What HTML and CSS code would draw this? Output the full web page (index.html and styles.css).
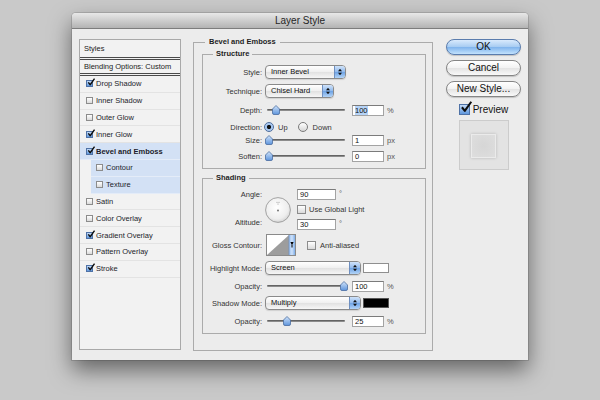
FILE: index.html
```html
<!DOCTYPE html>
<html>
<head>
<meta charset="utf-8">
<title>Layer Style</title>
<link rel="stylesheet" href="styles.css">
</head>
<body>
<svg class="defs" aria-hidden="true">
  <defs>
    <linearGradient id="gThumb" x1="0" y1="0" x2="0" y2="1">
      <stop offset="0" stop-color="#d3e5fb"/>
      <stop offset="1" stop-color="#5d94dc"/>
    </linearGradient>
    <radialGradient id="gDial" cx="0.45" cy="0.4" r="0.65">
      <stop offset="0" stop-color="#ffffff"/>
      <stop offset="0.7" stop-color="#eeeeee"/>
      <stop offset="1" stop-color="#cfcfcf"/>
    </radialGradient>
    <linearGradient id="gBlue" x1="0" y1="0" x2="1" y2="0">
      <stop offset="0" stop-color="#9cc2f2"/>
      <stop offset="0.5" stop-color="#cfe2fa"/>
      <stop offset="1" stop-color="#7eaee9"/>
    </linearGradient>
  </defs>
</svg>

<div class="window">
  <div class="titlebar">Layer Style</div>
  <div class="wbody">

    <div class="styles-panel">
      <div class="ph">Styles</div>
      <div class="ph ph2">Blending Options: Custom</div>
      <div class="item"><span class="cb on"><svg class="ck" viewBox="0 0 10 10"><path d="M1.6 4.8 L4 7.8 L9.4 0.2"/></svg></span>Drop Shadow</div>
      <div class="item"><span class="cb"></span>Inner Shadow</div>
      <div class="item"><span class="cb"></span>Outer Glow</div>
      <div class="item"><span class="cb on"><svg class="ck" viewBox="0 0 10 10"><path d="M1.6 4.8 L4 7.8 L9.4 0.2"/></svg></span>Inner Glow</div>
      <div class="item hl bold"><span class="cb on"><svg class="ck" viewBox="0 0 10 10"><path d="M1.6 4.8 L4 7.8 L9.4 0.2"/></svg></span>Bevel and Emboss</div>
      <div class="item hl sub"><span class="cb"></span>Contour</div>
      <div class="item hl sub"><span class="cb"></span>Texture</div>
      <div class="item"><span class="cb"></span>Satin</div>
      <div class="item"><span class="cb"></span>Color Overlay</div>
      <div class="item"><span class="cb on"><svg class="ck" viewBox="0 0 10 10"><path d="M1.6 4.8 L4 7.8 L9.4 0.2"/></svg></span>Gradient Overlay</div>
      <div class="item"><span class="cb"></span>Pattern Overlay</div>
      <div class="item"><span class="cb on"><svg class="ck" viewBox="0 0 10 10"><path d="M1.6 4.8 L4 7.8 L9.4 0.2"/></svg></span>Stroke</div>
    </div>

    <fieldset class="main">
      <legend>Bevel and Emboss</legend>

      <fieldset class="group">
        <legend>Structure</legend>
        <div class="row m5">
          <span class="lbl">Style:</span>
          <div class="select w81"><span class="sv">Inner Bevel</span><span class="sa"><svg viewBox="0 0 5 9"><path d="M2.5 0.5 L5 3.5 H0 Z M0 5.5 H5 L2.5 8.5 Z"/></svg></span></div>
        </div>
        <div class="row m5">
          <span class="lbl">Technique:</span>
          <div class="select w69"><span class="sv">Chisel Hard</span><span class="sa"><svg viewBox="0 0 5 9"><path d="M2.5 0.5 L5 3.5 H0 Z M0 5.5 H5 L2.5 8.5 Z"/></svg></span></div>
        </div>
        <div class="row h12 m6">
          <span class="lbl">Depth:</span>
          <div class="slider"><svg class="thumb" style="left:5px" viewBox="0 0 8 10"><path d="M4 0.5 L7.5 4 V8 Q7.5 9.5 6 9.5 H2 Q0.5 9.5 0.5 8 V4 Z"/></svg></div>
          <div class="field"><span class="sel">100</span></div>
          <span class="unit">%</span>
        </div>
        <div class="row h12 m5">
          <span class="lbl">Direction:</span>
          <span class="radio on"></span><span class="rt">Up</span>
          <span class="radio r2"></span><span class="rt">Down</span>
        </div>
        <div class="row h12 m1">
          <span class="lbl">Size:</span>
          <div class="slider"><svg class="thumb" style="left:-2px" viewBox="0 0 8 10"><path d="M4 0.5 L7.5 4 V8 Q7.5 9.5 6 9.5 H2 Q0.5 9.5 0.5 8 V4 Z"/></svg></div>
          <div class="field">1</div>
          <span class="unit">px</span>
        </div>
        <div class="row h12 m4">
          <span class="lbl">Soften:</span>
          <div class="slider"><svg class="thumb" style="left:-2px" viewBox="0 0 8 10"><path d="M4 0.5 L7.5 4 V8 Q7.5 9.5 6 9.5 H2 Q0.5 9.5 0.5 8 V4 Z"/></svg></div>
          <div class="field">0</div>
          <span class="unit">px</span>
        </div>
      </fieldset>

      <fieldset class="group shading">
        <legend>Shading</legend>
        <div class="angle">
          <span class="lbl a1">Angle:</span>
          <svg class="dial" viewBox="0 0 26 26">
            <circle cx="13" cy="13" r="12.4" fill="url(#gDial)" stroke="#8f8f8f" stroke-width="0.8"/>
            <circle cx="13" cy="13.5" r="0.9" fill="#666"/>
            <circle cx="12" cy="5.2" r="0.5" fill="#888"/>
            <circle cx="14" cy="5.2" r="0.5" fill="#888"/>
            <circle cx="13" cy="7" r="0.5" fill="#888"/>
          </svg>
          <div class="c3 r1"><div class="field w39">90</div><span class="unit deg">°</span></div>
          <div class="c3 r2"><span class="cb big"></span><span class="ct">Use Global Light</span></div>
          <span class="lbl a3">Altitude:</span>
          <div class="c3 r3"><div class="field w39">30</div><span class="unit deg">°</span></div>
        </div>
        <div class="row gloss">
          <span class="lbl">Gloss Contour:</span>
          <svg class="gsw" viewBox="0 0 30 22">
            <rect x="0.5" y="0.5" width="29" height="21" fill="#fff" stroke="#8a8a8a"/>
            <polygon points="1,21 23,1 23,21" fill="#9d9d9d"/>
            <rect x="23" y="1" width="6" height="20" fill="url(#gBlue)"/>
            <line x1="23" y1="1" x2="23" y2="21" stroke="#6f8fbf" stroke-width="0.8"/>
            <path d="M24.4 8 H27.6 L26 11.5 Z M25.5 11 H26.5 V13.5 H25.5 Z" fill="#000"/>
          </svg>
          <span class="cb big aa"></span><span class="ct2">Anti-aliased</span>
        </div>
        <div class="row m5">
          <span class="lbl">Highlight Mode:</span>
          <div class="select w96"><span class="sv">Screen</span><span class="sa"><svg viewBox="0 0 5 9"><path d="M2.5 0.5 L5 3.5 H0 Z M0 5.5 H5 L2.5 8.5 Z"/></svg></span></div>
          <span class="swatch white"></span>
        </div>
        <div class="row h12 m5">
          <span class="lbl">Opacity:</span>
          <div class="slider"><svg class="thumb" style="left:73px" viewBox="0 0 8 10"><path d="M4 0.5 L7.5 4 V8 Q7.5 9.5 6 9.5 H2 Q0.5 9.5 0.5 8 V4 Z"/></svg></div>
          <div class="field">100</div>
          <span class="unit">%</span>
        </div>
        <div class="row m4">
          <span class="lbl">Shadow Mode:</span>
          <div class="select w96"><span class="sv">Multiply</span><span class="sa"><svg viewBox="0 0 5 9"><path d="M2.5 0.5 L5 3.5 H0 Z M0 5.5 H5 L2.5 8.5 Z"/></svg></span></div>
          <span class="swatch black"></span>
        </div>
        <div class="row h12 m5">
          <span class="lbl">Opacity:</span>
          <div class="slider"><svg class="thumb" style="left:16px" viewBox="0 0 8 10"><path d="M4 0.5 L7.5 4 V8 Q7.5 9.5 6 9.5 H2 Q0.5 9.5 0.5 8 V4 Z"/></svg></div>
          <div class="field">25</div>
          <span class="unit">%</span>
        </div>
      </fieldset>
    </fieldset>

    <div class="side">
      <div class="btn ok">OK</div>
      <div class="btn">Cancel</div>
      <div class="btn">New Style...</div>
      <div class="pv"><span class="cb on pvcb"><svg class="ck" viewBox="0 0 10 10"><path d="M1.6 4.8 L4 7.8 L9.4 0.2"/></svg></span><span>Preview</span></div>
      <div class="preview-box"><div class="preview-inner"></div></div>
    </div>

  </div>
</div>
</body>
</html>
```

FILE: styles.css
```css
* { box-sizing: border-box; }
html, body { margin: 0; padding: 0; }
body {
  width: 600px;
  height: 400px;
  overflow: hidden;
  background: #c9c9c9;
  font-family: "Liberation Sans", Arial, sans-serif;
  font-size: 7.5px;
  color: #222;
}
.defs { position: absolute; width: 0; height: 0; overflow: hidden; }

.window {
  margin: 13px 0 0 72px;
  width: 456px;
  height: 347px;
  background: #ececec;
  border-radius: 4px 4px 0 0;
  box-shadow: 0 10px 22px rgba(0,0,0,.5), 0 0 0 1px rgba(0,0,0,.12);
}
.titlebar {
  height: 16px;
  line-height: 15px;
  text-align: center;
  font-size: 10px;
  color: #262626;
  background: linear-gradient(#e8e8e8, #b3b3b3);
  border-bottom: 1px solid #7d7d7d;
  border-radius: 4px 4px 0 0;
}
.wbody {
  display: flex;
  align-items: flex-start;
  padding: 7px 7px 0 7px;
}

/* left list */
.styles-panel {
  width: 102px;
  height: 311px;
  margin-top: 3px;
  border: 1px solid #a9a9a9;
  background: #f2f2f2;
  flex: none;
}
.ph {
  height: 20px;
  line-height: 17px;
  padding-left: 4px;
  border-bottom: 3px double #4a4a4a;
  color: #222;
}
.ph2 { height: 16px; line-height: 13px; }
.item {
  height: 16.8px;
  display: flex;
  align-items: center;
  padding-left: 6px;
  border-bottom: 1px solid #e3e3e3;
  color: #1c1c2a;
}
.item.hl { background: #d3e1f5; border-bottom-color: #e4ecf8; }
.item.bold { font-weight: bold; }
.item.sub { margin-left: 11px; padding-left: 5px; }

.cb {
  position: relative;
  flex: none;
  width: 7px;
  height: 7px;
  margin-right: 3px;
  border: 1px solid #8c8c8c;
  background: linear-gradient(#ffffff, #dadada);
}
.cb.on {
  background: linear-gradient(#c4dbf7, #5f97dd);
  border-color: #4f72a6;
}
.ck {
  position: absolute;
  left: 0;
  top: -3px;
  width: 8px;
  height: 9px;
  overflow: visible;
}
.ck path { fill: none; stroke: #0d0d0d; stroke-width: 1.7; stroke-linejoin: round; }
.cb.big { width: 9px; height: 9px; margin-right: 0; }

/* main fieldset */
fieldset { margin: 0; min-width: 0; }
legend {
  font-weight: bold;
  line-height: 12px;
  color: #1e1e1e;
}
.main {
  width: 240px;
  margin-left: 12px;
  padding: 0 6px 16px 8px;
  border: 1px solid #ababab;
  flex: none;
}
.main > legend { margin-left: 3px; padding: 0 4px; }
.group {
  padding: 0 6px 6px 0;
  border: 1px solid #ababab;
}
.group > legend { margin-left: 10px; padding: 0 3px; }
.shading { margin-top: 3px; }

.row { display: flex; align-items: center; height: 14px; }
.h12 { height: 12px; }
.m1 { margin-top: 1px; }
.m4 { margin-top: 4px; }
.m5 { margin-top: 5px; }
.m6 { margin-top: 6px; }
.lbl {
  width: 59px;
  flex: none;
  text-align: right;
  color: #333;
}

.select {
  display: flex;
  height: 14px;
  margin-left: 3px;
  border: 1px solid #8a8a8a;
  border-radius: 4px;
  overflow: hidden;
  background: linear-gradient(#ffffff, #efefef 50%, #e1e1e1 51%, #f6f6f6);
  box-shadow: 0 1px 1px rgba(0,0,0,.12);
  flex: none;
}
.w81 { width: 81px; }
.w69 { width: 69px; }
.w96 { width: 96px; }
.sv { flex: 1; padding-left: 5px; line-height: 12px; color: #111; }
.sa {
  width: 11px;
  display: flex;
  align-items: center;
  justify-content: center;
  border-left: 1px solid #6e8fc0;
  background: linear-gradient(#d0e3fa, #90b9ec 50%, #6da2e4 51%, #b3d4f7);
}
.sa svg { width: 4px; height: 8px; fill: #111; }

.slider {
  position: relative;
  width: 78px;
  height: 12px;
  margin-left: 5px;
  flex: none;
}
.slider::before {
  content: "";
  position: absolute;
  left: 0;
  right: 0;
  top: 5px;
  height: 2px;
  border-radius: 1px;
  background: linear-gradient(#505050, #a0a0a0);
}
.thumb {
  position: absolute;
  top: 1px;
  width: 8px;
  height: 10px;
}
.thumb path { fill: url(#gThumb); stroke: #4a6c9f; stroke-width: 0.8; }

.field {
  width: 32px;
  height: 11px;
  margin-left: 7px;
  padding-left: 2px;
  line-height: 9px;
  background: #fff;
  border: 1px solid #a3a3a3;
  border-top-color: #7b7b7b;
  color: #111;
  flex: none;
}
.sel { background: #b5d3f7; }
.unit { margin-left: 3px; color: #555; }
.deg { align-self: flex-start; }

.radio {
  position: relative;
  width: 10px;
  height: 10px;
  margin-left: 2px;
  border-radius: 50%;
  border: 1px solid #7a7a7a;
  background: linear-gradient(#ffffff, #d6d6d6);
  flex: none;
}
.radio.on {
  border-color: #4d6d9c;
  background: radial-gradient(circle at 50% 50%, #111 0, #111 1.8px, #9fc2ef 2.4px, #c8dcf6 100%);
}
.radio.r2 { margin-left: 10px; }
.rt { margin-left: 4px; color: #333; }
.radio.r2 + .rt { margin-left: 5px; }

/* shading */
.angle {
  display: grid;
  grid-template-columns: 59px 35px auto;
  grid-template-rows: 11px 19px 11px;
  margin-top: 5px;
}
.a1 { grid-row: 1; grid-column: 1; align-self: center; }
.a3 { grid-row: 3; grid-column: 1; align-self: start; line-height: 8px; }
.dial {
  grid-row: 1 / 4;
  grid-column: 2;
  align-self: center;
  width: 26px;
  height: 26px;
  margin-left: 3px;
}
.c3 { grid-column: 3; display: flex; align-items: center; }
.r1 { grid-row: 1; }
.r2 { grid-row: 2; }
.r3 { grid-row: 3; }
.w39 { width: 39px; margin-left: 0; }
.ct { margin-left: 3px; color: #333; }

.gloss { height: 22px; margin-top: 4px; }
.gsw { width: 30px; height: 22px; margin-left: 4px; flex: none; }
.aa { margin-left: 11px; }
.ct2 { margin-left: 4px; color: #333; }

.swatch {
  width: 26px;
  height: 10px;
  margin-left: 2px;
  border: 1px solid #8f8f8f;
  flex: none;
}
.swatch.white { background: #fff; }
.swatch.black { background: #000; border-color: #555; }

/* right side */
.side {
  width: 75px;
  margin-left: 13px;
  margin-top: 3px;
  display: flex;
  flex-direction: column;
  align-items: center;
  flex: none;
}
.btn {
  width: 75px;
  height: 16px;
  margin-bottom: 5px;
  border-radius: 8px;
  border: 1px solid #858585;
  background: linear-gradient(#ffffff, #f2f2f2 50%, #e3e3e3 51%, #f9f9f9);
  box-shadow: 0 1px 1px rgba(0,0,0,.18);
  font-size: 10px;
  line-height: 14px;
  text-align: center;
  color: #111;
}
.btn.ok {
  border-color: #5a7cad;
  background: linear-gradient(#d9eafc, #a6cbf2 50%, #7fb3ec 51%, #c2e2fd);
}
.pv {
  display: flex;
  align-items: center;
  height: 12px;
  margin-top: 1px;
  font-size: 10px;
  color: #111;
}
.pvcb { width: 11px; height: 11px; }
.pvcb .ck { width: 12px; height: 13px; top: -4px; }
.preview-box {
  width: 50px;
  height: 50px;
  margin-top: 5px;
  padding-top: 2px;
  background: #e3e3e3;
  border: 1px solid #cccccc;
  display: flex;
  align-items: center;
  justify-content: center;
}
.preview-inner {
  width: 25px;
  height: 24px;
  background: radial-gradient(circle, #d6d6d6, #dedede);
  border: 1px solid #ebebeb;
  box-shadow: 0 0 3px rgba(0,0,0,.2);
}
```
